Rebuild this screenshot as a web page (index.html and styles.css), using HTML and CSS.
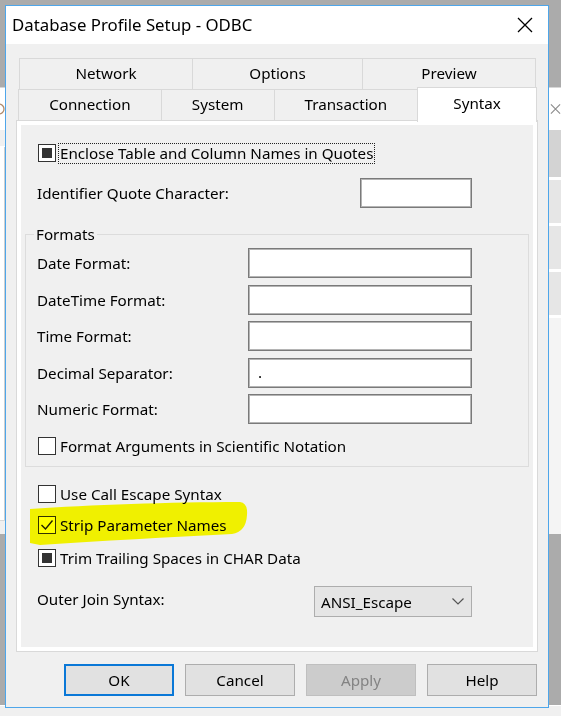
FILE: index.html
```html
<!DOCTYPE html>
<html lang="en">
<head>
<meta charset="utf-8">
<title>Database Profile Setup - ODBC</title>
<link rel="stylesheet" href="styles.css">
</head>
<body>
<div class="backwin">
  <div class="bw-left">
    <div class="bl-a"><svg class="bl-glyph" width="5" height="16" viewBox="0 0 5 16"><circle cx="-1" cy="8" r="5" fill="none" stroke="#b08a6a" stroke-width="1.3"/></svg></div>
    <div class="bl-b"></div>
    <div class="bl-c"></div>
    <div class="bl-d"></div>
  </div>
  <div class="bw-right">
    <div class="br-a"><svg class="br-x" width="12" height="12" viewBox="0 0 12 12"><path d="M1 1L11 11M11 1L1 11" stroke="#8a8a8a" stroke-width="1.2"/></svg></div>
    <div class="br-band dark"></div>
    <div class="br-band"></div>
    <div class="br-band"></div>
    <div class="br-band"></div>
    <div class="br-rest"></div>
  </div>
</div>
<div class="floor"></div>

<div class="dialog">
  <div class="titlebar">
    <span class="title">Database Profile Setup - ODBC</span>
    <span class="close"><svg width="16" height="16" viewBox="0 0 16 16"><path d="M1 1L15 15M15 1L1 15" stroke="#000" stroke-width="1.3"/></svg></span>
  </div>
  <div class="dlg-body">
    <div class="tabs">
      <div class="tabrow back">
        <div class="tab t-network">Network</div>
        <div class="tab t-options">Options</div>
        <div class="tab t-preview">Preview</div>
      </div>
      <div class="tabrow front">
        <div class="tab t-connection">Connection</div>
        <div class="tab t-system">System</div>
        <div class="tab t-transaction">Transaction</div>
        <div class="tab t-syntax selected">Syntax</div>
      </div>
    </div>
    <div class="panel">
      <div class="page">
        <div class="cbrow first">
          <span class="cb ind"></span>
          <span class="cblabel focus">Enclose Table and Column Names in Quotes</span>
        </div>
        <div class="row ident">
          <span class="lbl">Identifier Quote Character:</span>
          <span class="tb tb-short"></span>
        </div>
        <fieldset class="group">
          <legend>Formats</legend>
          <div class="fmt-grid">
            <span class="lbl">Date Format:</span><span class="tb"></span>
            <span class="lbl">DateTime Format:</span><span class="tb"></span>
            <span class="lbl">Time Format:</span><span class="tb"></span>
            <span class="lbl">Decimal Separator:</span><span class="tb">.</span>
            <span class="lbl">Numeric Format:</span><span class="tb"></span>
          </div>
          <div class="cbrow sci">
            <span class="cb"></span>
            <span class="cblabel">Format Arguments in Scientific Notation</span>
          </div>
        </fieldset>
        <div class="cbrow call">
          <span class="cb"></span>
          <span class="cblabel">Use Call Escape Syntax</span>
        </div>
        <div class="cbrow strip">
          <span class="cb chk"><svg width="16" height="16" viewBox="0 0 16 16"><path d="M2.5 8L6.5 12L13.5 3.5" fill="none" stroke="#222" stroke-width="1.4"/></svg></span>
          <span class="cblabel">Strip Parameter Names</span>
        </div>
        <div class="cbrow trim">
          <span class="cb ind"></span>
          <span class="cblabel">Trim Trailing Spaces in CHAR Data</span>
        </div>
        <div class="row outer">
          <span class="lbl outer-lbl">Outer Join Syntax:</span>
          <span class="combo"><span class="combo-text">ANSI_Escape</span><svg width="12" height="7" viewBox="0 0 12 7"><path d="M0.5 0.5L6 6L11.5 0.5" fill="none" stroke="#555" stroke-width="1.2"/></svg></span>
        </div>
      </div>
    </div>
    <div class="buttons">
      <button class="btn default">OK</button>
      <button class="btn">Cancel</button>
      <button class="btn disabled" disabled>Apply</button>
      <button class="btn">Help</button>
    </div>
  </div>
</div>

<svg class="highlight" width="561" height="716" viewBox="0 0 561 716">
  <path d="M30 509 C 90 505, 170 502, 240 502 Q 248 503 247 515 Q 246 532 232 534 C 170 537, 100 541, 40 545 L 30 543 Z" fill="#ffff00"/>
</svg>
</body>
</html>
```

FILE: styles.css
```css
* { box-sizing: border-box; }
html, body { margin: 0; padding: 0; }
body {
  width: 561px;
  height: 716px;
  overflow: hidden;
  position: relative;
  background: #ababab;
  font-family: "Noto Sans", "Open Sans", sans-serif;
  font-size: 15.2px;
  line-height: 20px;
  color: #000;
}

/* background window behind the dialog */
.backwin {
  position: absolute;
  left: 0; top: 87px;
  width: 561px; height: 447px;
  background: #fff;
  border-top: 1px solid #d6d6d6;
  display: flex;
  justify-content: space-between;
}
.bw-left { width: 5px; display: flex; flex-direction: column; }
.bl-a { height: 42px; background: #fff; display: flex; align-items: center; }
.bl-b { height: 17px; background: #f0f0f0; border-bottom: 1px solid #fff; }
.bl-c { flex: 1; border-right: 1px solid #cfcfcf; background: #fff; }
.bl-d { height: 14px; background: #f0f0f0; border-top: 1px solid #d8d8d8; }
.bw-right { width: 12px; display: flex; flex-direction: column; }
.br-a { height: 42px; display: flex; align-items: center; padding-left: 1px; }
.br-band { height: 46px; background: #e6e6e6; border-bottom: 3px solid #fff; }
.br-band.dark { height: 50px; background: #d3d3d3; }
.br-rest { flex: 1; background: #f4f4f4; }

.floor {
  position: absolute;
  left: 0; top: 705px;
  width: 561px; height: 11px;
  background: #f0f0f0;
  border-top: 1px solid #fff;
}

/* dialog window */
.dialog {
  position: absolute;
  left: 5px; top: 5px;
  width: 544px; height: 703px;
  border: 1px solid #4ea6ea;
  background: #f0f0f0;
  display: flex;
  flex-direction: column;
}
.titlebar {
  height: 38px;
  background: #fff;
  display: flex;
  align-items: center;
  justify-content: space-between;
  padding-left: 6px;
}
.title { font-size: 16.8px; }
.close {
  width: 46px; height: 38px;
  display: flex; align-items: center; justify-content: center;
}
.dlg-body {
  flex: 1;
  padding: 14px 11px 0 10px;
  display: flex;
  flex-direction: column;
}

/* tabs */
.tabs { margin-left: 2px; }
.tabrow { display: flex; height: 31px; }
.tabrow.back { margin-left: 1px; }
.tab {
  height: 31px;
  border: 1px solid #d9d9d9;
  border-bottom: none;
  background: #f0f0f0;
  display: flex;
  align-items: center;
  justify-content: center;
  margin-left: -1px;
  padding-bottom: 2px;
}
.tab:first-child { margin-left: 0; }
.t-network { width: 174px; }
.t-options { width: 171px; }
.t-preview { width: 174px; }
.t-connection { width: 144px; }
.t-system { width: 114px; }
.t-transaction { width: 145px; }
.t-syntax { width: 120px; }
.tab.selected {
  background: #fff;
  height: 35px;
  margin-top: -2px;
  position: relative;
  z-index: 2;
  padding-bottom: 5px;
}

.panel {
  position: relative;
  z-index: 1;
  width: 522px;
  height: 532px;
  border: 1px solid #d9d9d9;
  background: #fff;
  padding: 4px;
}
.page {
  height: 100%;
  background: #f0f0f0;
  padding: 17px 4px 0 4px;
}

.row {
  display: flex;
  align-items: center;
  justify-content: space-between;
  padding: 0 57px 0 12px;
}
.ident { height: 30px; margin-top: 14px; }
.tb {
  display: block;
  height: 30px;
  background: #fff;
  border: 1px solid #7a7a7a;
  box-shadow: inset 0 0 0 1px #b4b4b4;
  padding-left: 9px;
  line-height: 26px;
}
.tb-short { width: 112px; }

.cbrow {
  display: flex;
  align-items: center;
  height: 22px;
  padding-left: 13px;
}
.cb {
  width: 18px; height: 18px;
  border: 1px solid #333;
  background: #fff;
  display: flex;
  align-items: center;
  justify-content: center;
  flex: none;
}
.cb.ind::after {
  content: "";
  width: 10px; height: 10px;
  background: #333;
}
.cblabel { margin-left: 4px; }
.cblabel.focus {
  margin-left: 2px;
  border: 1px dotted #222;
  padding: 0 1px;
  line-height: 19px;
}

.group {
  margin: 16px 0 0 0;
  padding: 4px 56px 9px 11px;
  border: 1px solid #dcdcdc;
  min-width: 0;
}
.group legend {
  padding: 0 2px;
  margin-left: -3px;
  line-height: 20px;
}
.fmt-grid {
  display: grid;
  grid-template-columns: 1fr 224px;
  row-gap: 6.5px;
  align-items: center;
}
.fmt-grid .tb { height: 30px; }
.cbrow.sci { padding-left: 1px; margin-top: 11px; }
.cbrow.call { margin-top: 16px; }
.cbrow.strip { margin-top: 9px; }
.cbrow.trim { margin-top: 11px; }
.outer { margin-top: 17px; height: 31px; }
.outer-lbl { margin-bottom: 5px; }

.combo {
  width: 158px; height: 31px;
  background: #e5e5e5;
  border: 1px solid #adadad;
  display: flex;
  align-items: center;
  justify-content: space-between;
  padding: 0 7px 0 6px;
}

.buttons {
  display: flex;
  justify-content: flex-end;
  gap: 11px;
  margin-top: 12px;
}
.btn {
  width: 110px; height: 32px;
  font: inherit;
  color: #000;
  background: #e1e1e1;
  border: 1px solid #adadad;
  padding: 0;
  margin: 0;
}
.btn.default { border: 2px solid #0a78d7; }
.btn.disabled { background: #cccccc; border-color: #bfbfbf; color: #838383; }

.highlight {
  position: absolute;
  left: 0; top: 0;
  z-index: 10;
  pointer-events: none;
  mix-blend-mode: multiply;
}
```
